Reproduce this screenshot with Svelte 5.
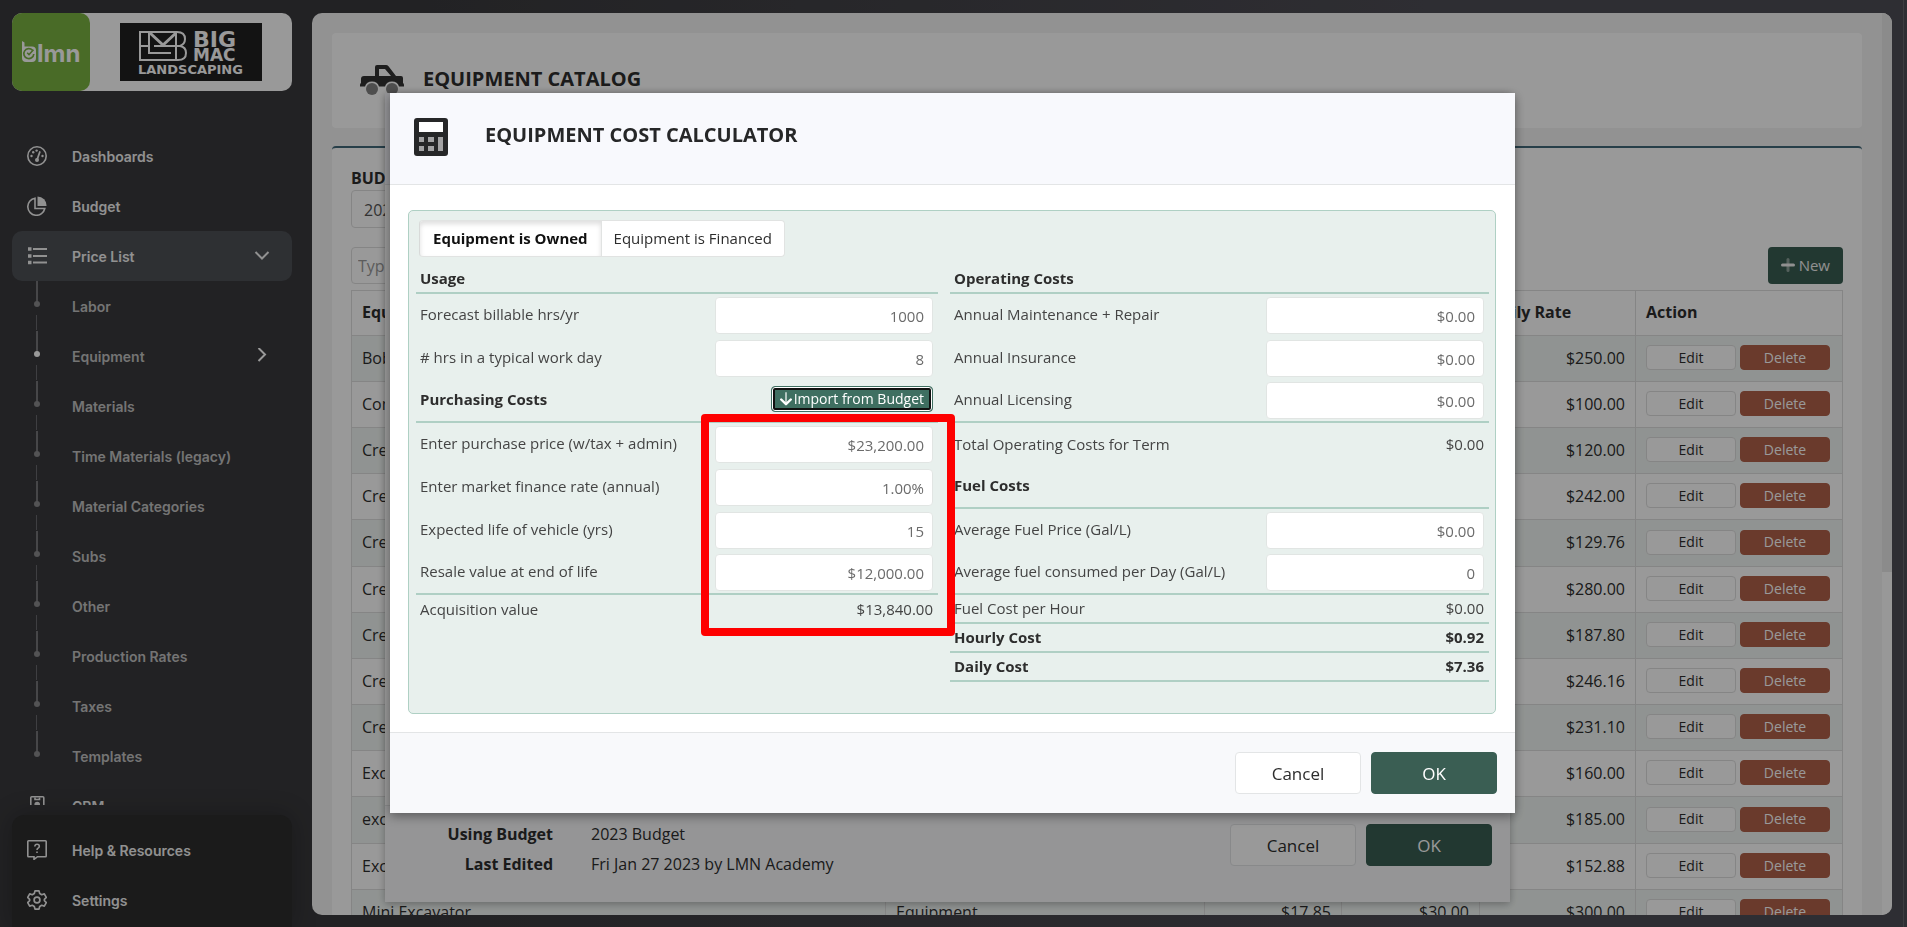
<script>
  const subItems = [
    'Labor', 'Equipment', 'Materials', 'Time Materials (legacy)', 'Material Categories',
    'Subs', 'Other', 'Production Rates', 'Taxes', 'Templates'
  ];

  const rows = [
    ['Bobcat', '$250.00'],
    ['Compactor', '$100.00'],
    ['Crew Truck', '$120.00'],
    ['Crew Truck', '$242.00'],
    ['Crew Truck', '$129.76'],
    ['Crew Truck', '$280.00'],
    ['Crew Truck', '$187.80'],
    ['Crew Truck', '$246.16'],
    ['Crew Truck', '$231.10'],
    ['Excavator', '$160.00'],
    ['excavator', '$185.00'],
    ['Excavator', '$152.88'],
    ['Mini Excavator', '$300.00']
  ];

  const left = [
    { kind: 'head first', label: 'Usage' },
    { kind: 'input', label: 'Forecast billable hrs/yr', value: '1000' },
    { kind: 'input', label: '# hrs in a typical work day', value: '8' },
    { kind: 'head', label: 'Purchasing Costs', action: true },
    { kind: 'input', label: 'Enter purchase price (w/tax + admin)', value: '$23,200.00' },
    { kind: 'input', label: 'Enter market finance rate (annual)', value: '1.00%' },
    { kind: 'input', label: 'Expected life of vehicle (yrs)', value: '15' },
    { kind: 'input ruled', label: 'Resale value at end of life', value: '$12,000.00' },
    { kind: 'short', label: 'Acquisition value', value: '$13,840.00' }
  ];

  const right = [
    { kind: 'head first', label: 'Operating Costs' },
    { kind: 'input', label: 'Annual Maintenance + Repair', value: '$0.00' },
    { kind: 'input', label: 'Annual Insurance', value: '$0.00' },
    { kind: 'input ruled', label: 'Annual Licensing', value: '$0.00' },
    { kind: 'total', label: 'Total Operating Costs for Term', value: '$0.00' },
    { kind: 'head', label: 'Fuel Costs' },
    { kind: 'input', label: 'Average Fuel Price (Gal/L)', value: '$0.00' },
    { kind: 'input ruled', label: 'Average fuel consumed per Day (Gal/L)', value: '0' },
    { kind: 'short ruled', label: 'Fuel Cost per Hour', value: '$0.00' },
    { kind: 'short ruled strong', label: 'Hourly Cost', value: '$0.92' },
    { kind: 'short ruled strong', label: 'Daily Cost', value: '$7.36' }
  ];
</script>

{#snippet column(items, side)}
  <div class="column">
    {#each items as item, i}
      <div class="line {item.kind}">
        {#if item.kind.startsWith('head')}
          <h3>{item.label}</h3>
          {#if item.action}
            <button class="import" type="button">
              <svg width="12" height="14" viewBox="0 0 12 14" fill="none" stroke="currentColor" stroke-width="2" stroke-linecap="round" stroke-linejoin="round">
                <path d="M6 1v9" opacity=".6" /><path d="M1.2 7.500 6 12.200l4.800-4.700" stroke-width="2.400" />
              </svg>Import from Budget
            </button>
          {/if}
        {:else if item.kind.startsWith('input')}
          <label for="{side}-{i}">{item.label}</label>
          <input id="{side}-{i}" type="text" value={item.value} />
        {:else}
          <span>{item.label}</span>
          <span>{item.value}</span>
        {/if}
      </div>
    {/each}
  </div>
{/snippet}

<div class="app">
  <aside>
    <div class="brand">
      <svg class="lmn" viewBox="0 0 78 78" role="img" aria-label="lmn">
        <rect width="78" height="78" rx="10" fill="#7bb242" />
        <path d="M10 28l2.500 1.500v4h7.500q4 0 4 4v7.500q0 4-4 4h-6q-4 0-4-4z" fill="#fff" />
        <path d="M20.500 37.200a5 5 0 1 0 1.300 3.800" fill="none" stroke="#7bb242" stroke-width="1.700" />
        <path d="M15.200 39.800l1.800 1.800 4.500-4.800" fill="none" stroke="#7bb242" stroke-width="1.500" />
        <text x="25" y="49" class="lmn-text">lmn</text>
      </svg>
      <svg class="bigmac" viewBox="0 0 142 58" role="img" aria-label="Big Mac Landscaping">
        <rect width="142" height="58" fill="#202020" />
        <g fill="none" stroke="#fff" stroke-width="2">
          <path d="M20 9h37q8 0 8 7 0 5-5 7 6 1 6 7 0 7-8 7H20z" />
          <path d="M29 9v21h22M20 23h9M34 23h26M56 9v28" />
          <path d="M30 10l13 12 13-12" stroke-width="3" />
        </g>
        <g fill="#fff" class="bm-text">
          <text x="73" y="24" font-size="22">BIG</text>
          <text x="73" y="38" font-size="17">MAC</text>
          <text x="18" y="51" font-size="13">LANDSCAPING</text>
        </g>
      </svg>
    </div>

    <nav>
      <a href="#dashboards" class="item">
        <svg viewBox="0 0 20 20" fill="none" stroke="currentColor" stroke-width="1.600">
          <circle cx="10" cy="10" r="9.200" />
          <circle cx="10" cy="14" r="2" fill="currentColor" stroke="none" /><path d="M10 14l2.800-8" stroke-width="1.800" stroke-linecap="round" />
          <g fill="currentColor" stroke="none"><circle cx="4.500" cy="10" r="1.200" /><circle cx="6.200" cy="6.300" r="1.200" /><circle cx="9.600" cy="4.600" r="1.200" /><circle cx="15.500" cy="10" r="1.200" /></g>
        </svg>
        Dashboards
      </a>
      <a href="#budget" class="item">
        <svg viewBox="0 0 20 20" fill="none" stroke="currentColor" stroke-width="1.600">
          <path d="M8 2.200a8.600 8.600 0 1 0 9.800 10.300H8z" />
          <path d="M10.500.5a9 9 0 0 1 9 9.500h-9z" fill="currentColor" stroke="none" />
        </svg>
        Budget
      </a>
      <a href="#price-list" class="item active">
        <svg viewBox="0 0 20 20" fill="none" stroke="currentColor" stroke-width="1.900">
          <path d="M6 3h14M6 10h14M6 16.500h14" />
          <path d="M1 3h3.500M1 10h3.500M1 16.500h3.500" stroke-width="3.600" />
        </svg>
        <span class="grow">Price List</span>
        <svg class="chev" viewBox="0 0 16 16" fill="none" stroke="currentColor" stroke-width="2"><path d="M1.500 4 8 10.500l6.500-6.500" /></svg>
      </a>
      {#each subItems as name, i}
        <a href="#{name.toLowerCase().replaceAll(' ', '-')}" class="item sub">
          <svg class="rail" viewBox="0 0 20 50">
            <rect x="9" y="0" width="2" height="22" fill="#77777b" />
            <circle cx="10" cy="23" r="3" fill={name === 'Equipment' ? '#fff' : '#8a8a8d'} />
            {#if i < subItems.length - 1}
              <rect x="9" y="34" width="1" height="15" fill="#6a6a6e" />
            {/if}
          </svg>
          <span class="grow">{name}</span>
          {#if name === 'Equipment'}
            <svg class="chev" viewBox="0 0 16 16" fill="none" stroke="#fff" stroke-width="2"><path d="M4.500 0 11 6.500 4.500 13" /></svg>
          {/if}
        </a>
      {/each}
      <a href="#crm" class="item crm">
        <svg viewBox="0 0 20 20" fill="none" stroke="currentColor" stroke-width="1.600">
          <rect x="3.800" y=".8" width="13" height="18" rx="1" /><path d="M8 1.500v2h4.500v-2" /><circle cx="10.200" cy="8.500" r="2" fill="currentColor" />
        </svg>
        CRM
      </a>
    </nav>

    <div class="support">
      <a href="#help" class="item">
        <svg viewBox="0 0 20 20" fill="none" stroke="currentColor" stroke-width="1.600">
          <path d="M1.500.8h17q.7 0 .7.700v14.500q0 .7-.7.700h-8l-3.500 2.700v-2.700H1.500q-.7 0-.7-.7V1.500q0-.7.700-.7z" />
          <path d="M7.800 6.500q.2-2.200 2.300-2.200 2.200 0 2.200 1.900 0 1.200-1.200 1.900-1.100.7-1.100 1.900" /><path d="M10 11.500v1.600" />
        </svg>
        Help &amp; Resources
      </a>
      <a href="#settings" class="item">
        <svg viewBox="0 0 20 20" fill="none" stroke="currentColor" stroke-width="1.700" stroke-linejoin="round">
          <path d="M8 .9h4l.7 2.600 2 1.200 2.600-.8 2 3.500-1.900 1.900v1.400l1.900 1.900-2 3.500-2.600-.8-2 1.200-.7 2.600H8l-.7-2.600-2-1.200-2.600.8-2-3.500 1.900-1.900V9.300L.7 7.400l2-3.500 2.600.8 2-1.200z" />
          <circle cx="10" cy="10" r="2.900" />
        </svg>
        Settings
      </a>
    </div>
  </aside>

  <main>
    <div class="scroll">
      <header class="card title">
        <svg width="44" height="31" viewBox="0 0 44 31">
          <g fill="#6e6e6e" opacity=".85"><circle cx="12" cy="24" r="6" /><circle cx="32" cy="24" r="6" /></g>
          <path d="M17 0h9q1.500 0 2.500 1.200L36 11h5q2 0 2 2v5q1 .5 1 2v1.500h-5q-1.500-5-7-5t-7 5h-6q-1.500-5-7-5t-7 5H0V20q0-1.500 1-2v-4q0-3 3-3h11V2q0-2 2-2zm2 4v7h12l-6-7z" fill="#333" />
        </svg>
        <h1>EQUIPMENT CATALOG</h1>
      </header>
      <section class="card list">
        <label for="budget">BUDGET</label>
        <select id="budget"><option>2023 Budget</option></select>
        <div class="tools">
          <input type="text" placeholder="Type to search" aria-label="Search equipment" />
          <button class="new" type="button">
            <svg width="14" height="14" viewBox="0 0 14 14" stroke="currentColor" stroke-width="3" stroke-linecap="round"><path d="M1.500 7h11" /><path d="M7 1.500v11" opacity=".45" /></svg>New
          </button>
        </div>
        <table>
          <colgroup><col class="c1" /><col class="c2" /><col class="c3" /><col class="c4" /><col class="c5" /><col class="c6" /></colgroup>
          <thead>
            <tr><th>Equipment</th><th>Type</th><th>Cost</th><th>Rate</th><th>Daily Rate</th><th>Action</th></tr>
          </thead>
          <tbody>
            {#each rows as [name, rate]}
              <tr>
                <td>{name}</td><td>Equipment</td><td class="num">$17.85</td><td class="num">$30.00</td><td class="num">{rate}</td>
                <td><div class="actions"><button type="button">Edit</button><button type="button" class="delete">Delete</button></div></td>
              </tr>
            {/each}
          </tbody>
        </table>
      </section>
    </div>
    <div class="track"><div class="thumb"></div></div>
  </main>
</div>

<div class="layer under">
  <section class="modal">
    <div class="modal-head"></div>
    <div class="modal-body"></div>
    <footer>
      <dl><dt>Using Budget</dt><dd>2023 Budget</dd><dt>Last Edited</dt><dd>Fri Jan 27 2023 by LMN Academy</dd></dl>
      <button type="button">Cancel</button>
      <button type="button" class="ok">OK</button>
    </footer>
  </section>
</div>

<div class="layer shade">
  <section class="modal" role="dialog" aria-labelledby="calc-title">
    <header class="modal-head">
      <svg width="34" height="38" viewBox="0 0 34 38">
        <rect width="34" height="38" rx="3" fill="#262728" /><rect x="5" y="4" width="24" height="10" fill="#fff" />
        <g fill="#a3a3a4"><rect x="5" y="19" width="5" height="5" /><rect x="14" y="19" width="6" height="5" /><rect x="5" y="28" width="5" height="5" /><rect x="14" y="28" width="6" height="5" /><rect x="24" y="19" width="5" height="14" /></g>
      </svg>
      <h2 id="calc-title">EQUIPMENT COST CALCULATOR</h2>
    </header>
    <div class="modal-body">
      <div class="panel">
        <div class="tabs">
          <button type="button" class="on">Equipment is Owned</button><button type="button">Equipment is Financed</button>
        </div>
        <div class="columns">
          {@render column(left, 'left')}
          {@render column(right, 'right')}
        </div>
      </div>
    </div>
    <footer>
      <button type="button">Cancel</button>
      <button type="button" class="ok">OK</button>
    </footer>
    <div class="highlight"></div>
  </section>
</div>

<style>
  :global(body) { margin: 0; background: #4e4d55; overflow: hidden; }
  .app, .layer { font-family: 'Open Sans', sans-serif; font-size: 16px; color: #2d2d2d; box-sizing: border-box; }
  .app *, .layer * { box-sizing: border-box; }
  button, input, select { font: inherit; color: inherit; }
  h1, h2, h3, dl, dd { margin: 0; }

  .app { display: grid; grid-template-columns: 312px 1fr; height: 100vh; margin-right: 3px; border-right: 1px solid #66666c; background: linear-gradient(90deg, #39393c 20%, #4e4d55 75%); }

  aside { display: flex; flex-direction: column; min-height: 0; padding: 13px 20px 0 12px; background: #39393c; }
  .brand { display: flex; flex: none; height: 78px; background: #fff; border-radius: 10px; margin-bottom: 40px; align-items: center; }
  .lmn { width: 78px; height: 78px; margin-right: 30px; }
  .lmn-text { font: 700 24px Inter, sans-serif; fill: #fff; }
  .bigmac { width: 142px; height: 58px; }
  .bm-text { font-family: 'DejaVu Sans', sans-serif; font-weight: 700; }
  nav { flex: 1; min-height: 0; overflow: hidden; margin-bottom: 10px; }
  .item { display: flex; align-items: center; height: 50px; padding: 0 22px 0 15px; border-radius: 10px; font: 600 14px Inter, sans-serif; color: #f2f2f2; text-decoration: none; }
  .item svg { width: 20px; height: 20px; margin-right: 25px; flex: none; }
  .item .chev { width: 16px; height: 16px; margin: 0; }
  .item.active { background: #4d5056; }
  .item .grow { flex: 1; }
  .item.sub { color: #c2c2c2; }
  .item .rail { height: 50px; }
  .support { flex: none; padding: 10px 0 2px; background: #2d2d2d; border-radius: 12px 12px 0 0; box-shadow: 0 0 24px rgba(0, 0, 0, .25); }

  main { display: flex; margin: 13px 11px 12px 0; background: #f3f3f3; border-radius: 10px; overflow: hidden; min-height: 0; }
  .scroll { flex: 1; padding: 20px 20px 0; overflow: hidden; }
  .track { width: 10px; background: #fdfdfd; }
  .thumb { height: 62%; background: #e8e8e8; }
  .card { background: #fff; border-radius: 4px; }
  .title { display: flex; align-items: flex-start; height: 95px; margin-bottom: 18px; padding: 32px 28px; }
  h1, h2 { font-size: 20px; line-height: 28px; font-weight: 700; }
  h1 { margin-left: 19px; }
  .list { padding: 19px 19px 0; border-top: 2px solid #41697a; }
  .list > label { display: block; font-weight: 700; line-height: 22px; margin-bottom: 1px; }
  select, .tools input { height: 38px; border: 1px solid #dedede; border-radius: 4px; background: #fff; color: #555; padding: 2px 8px 0; width: 220px; }
  .tools { display: flex; justify-content: space-between; margin: 19px 0 6px; }
  .tools input { height: 37px; padding: 0 6px; }
  .tools input::placeholder { color: #999; }
  .new { display: flex; align-items: center; gap: 4px; height: 37px; padding: 0 13px 2px; border: 0; border-radius: 4px; background: #3a5e53; color: #f0f0f0; font-size: 15px; }
  table { width: 100%; border-collapse: collapse; table-layout: fixed; }
  .c1 { width: 534px; } .c2 { width: auto; } .c3 { width: 137px; } .c4 { width: 138px; } .c5 { width: 156px; } .c6 { width: 207px; }
  th, td { height: 46px; padding: 0 10px 2px; border: 1px solid #dedede; text-align: left; }
  th { height: 45px; font-weight: 700; }
  tbody tr:nth-child(6n + 5) td { height: 47px; }
  .num { text-align: right; }
  tbody tr:nth-child(odd) { background: #f1f6f4; }
  .actions { display: flex; gap: 4px; }
  .actions button { width: 90px; height: 25px; padding: 0; border: 1px solid #dedede; border-radius: 4px; background: #fff; font-size: 14px; line-height: 20px; }
  .actions .delete { background: #b1614a; border-color: #b1614a; color: #fff; }

  .layer { position: fixed; inset: 0; display: flex; justify-content: center; align-items: flex-start; padding-top: 93px; }
  .under { padding-right: 12px; }
  .shade { padding-right: 2px; background: rgba(0, 0, 0, .4); }
  .modal { position: relative; width: 1125px; background: #fff; box-shadow: 0 3px 10px rgba(0, 0, 0, .4); }
  .under .modal { box-shadow: 0 2px 8px rgba(0, 0, 0, .3); }
  .modal-head { display: flex; gap: 37px; height: 92px; padding: 25px 24px; background: #f8f9fd; border-bottom: 1px solid #e3e5e6; }
  h2 { line-height: 34px; color: #262728; }
  .modal-body { padding: 25px 19px 18px 18px; }
  .under .modal-body { height: 620px; }
  footer { display: flex; justify-content: flex-end; gap: 10px; padding: 19px 18px 19px 56px; background: #f8f9fb; border-top: 1px solid #e3e5e6; }
  .under footer { padding-bottom: 36px; padding-top: 18px; }
  footer button { width: 126px; height: 42px; border: 1px solid #e3e5e6; border-radius: 4px; background: #fff; font-size: 17px; padding: 0; }
  footer .ok { background: #3a5e53; border-color: #3a5e53; color: #fff; font-weight: 500; }
  dl { display: grid; grid-template-columns: 112px auto; column-gap: 38px; line-height: 30px; height: 42px; margin-top: -5px; margin-right: auto; font-size: 16px; }
  dt { text-align: right; font-weight: 700; }

  .panel { padding: 9px 6px 31px 7px; background: #e8f0ed; border: 1px solid #afd0c4; border-radius: 5px; }
  .tabs { display: flex; margin-left: 3px; }
  .tabs button { height: 37px; padding: 0 12px 2px; background: #fff; border: 1px solid #e1e3e2; border-left: 0; border-radius: 0 4px 4px 0; font-size: 15px; }
  .tabs .on { padding: 0 13px 2px; border-left: 1px solid #d8dad9; border-radius: 4px 0 0 4px; font-weight: 700; color: #111; box-shadow: inset 0 3px 5px rgba(0, 0, 0, .13); }
  .columns { display: grid; grid-template-columns: 522fr 539fr; gap: 12px; }
  .line { display: flex; align-items: center; justify-content: space-between; height: 43px; padding: 0 5px 0 4px; font-size: 15px; color: #444; }
  .line label { padding-bottom: 3px; }
  .head, .ruled { border-bottom: 2px solid #afcfc4; }
  .head { padding-bottom: 4px; }
  .head.first { height: 37px; padding: 6px 4px 0; }
  h3 { font-size: 15px; font-weight: 700; color: #2d2d2d; }
  .line input { width: 218px; height: 37px; padding: 0 8px; border: 1px solid #e1e5e3; border-radius: 4px; background: #fff; color: #6b6b6b; text-align: right; }
  .total { padding-bottom: 2px; }
  .short { height: 29px; padding-bottom: 2px; }
  .strong { font-weight: 700; color: #2d2d2d; }
  .import { display: flex; align-items: center; gap: 2px; height: 26px; padding: 0 8px; border: 1px solid #3f6f61; border-radius: 4px; background: #3f6f61; color: #fff; font-size: 14px; box-shadow: inset 0 0 0 1px #fff, inset 0 0 0 3px #101010; }
  .highlight { position: absolute; left: 311px; top: 321px; width: 254px; height: 222px; border: 8px solid #fe0000; border-radius: 4px; pointer-events: none; }
</style>
